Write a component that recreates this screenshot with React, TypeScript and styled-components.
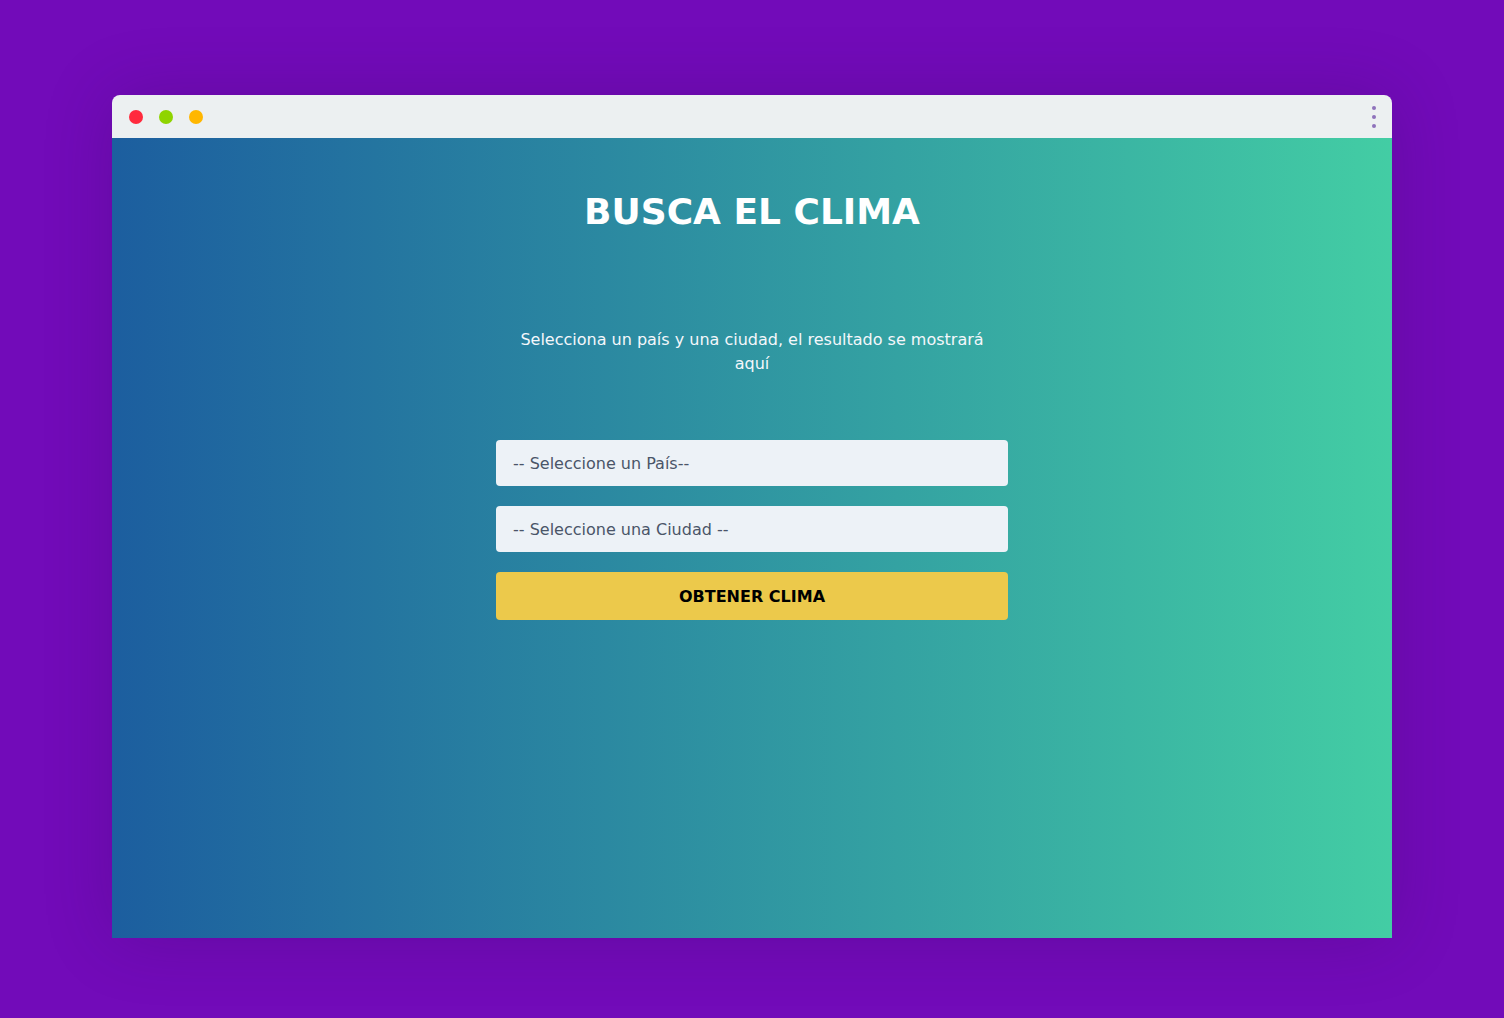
import React from "react";
import styled, { createGlobalStyle } from "styled-components";

const Global = createGlobalStyle`
  html, body { margin: 0; padding: 0; }
  body {
    background: #720bb9;
    font-family: "DejaVu Sans", "Noto Sans", sans-serif;
    min-height: 1018px;
  }
  * { box-sizing: border-box; }
`;

const Page = styled.div`
  padding-top: 95px;
  display: flex;
  justify-content: center;
`;

const Window = styled.div`
  width: 1280px;
  display: flex;
  flex-direction: column;
  border-radius: 8px 8px 0 0;
  box-shadow: 0 0 70px rgba(40, 0, 60, 0.2);
`;

const TitleBar = styled.div`
  height: 43px;
  background: #ecf0f1;
  border-radius: 8px 8px 0 0;
  display: flex;
  align-items: center;
  padding: 0 16px 0 17px;
`;

const Lights = styled.div`
  display: flex;
  gap: 16px;
  flex: 1;
`;

const Light = styled.span<{ $c: string }>`
  width: 14px;
  height: 14px;
  border-radius: 50%;
  background: ${(p) => p.$c};
`;

const Kebab = styled.div`
  display: flex;
  flex-direction: column;
  gap: 5px;
`;

const KDot = styled.span`
  width: 4px;
  height: 4px;
  border-radius: 50%;
  background: #8e72bb;
`;

const Content = styled.main`
  height: 800px;
  background: linear-gradient(to right, #1c5e9f, #43cda4);
  display: flex;
  flex-direction: column;
  align-items: center;
  color: #fff;
`;

const Title = styled.h1`
  margin: 53px 0 0;
  font-size: 36px;
  font-weight: 700;
  line-height: 42px;
  color: #fff;
`;

const Subtitle = styled.p`
  margin: 95px 0 0;
  width: 480px;
  text-align: center;
  font-size: 16px;
  line-height: 24px;
  color: #f4f7fb;
`;

const Form = styled.form`
  margin-top: 64px;
  width: 512px;
  display: flex;
  flex-direction: column;
  gap: 20px;
`;

const Select = styled.select`
  appearance: none;
  -webkit-appearance: none;
  width: 100%;
  height: 46px;
  border: none;
  border-radius: 4px;
  background: #edf2f7;
  color: #4a5568;
  font-family: "DejaVu Sans", sans-serif;
  font-size: 16px;
  padding: 0 17px;
  outline: none;
`;

const Button = styled.button`
  height: 48px;
  border: none;
  border-radius: 4px;
  background: #ecc94b;
  color: #000;
  font-family: "DejaVu Sans", sans-serif;
  font-size: 16px;
  font-weight: 700;
  text-transform: uppercase;
  cursor: pointer;
`;

export default function App() {
  return (
    <>
      <Global />
      <Page>
        <Window>
          <TitleBar>
            <Lights>
              <Light $c="#ff2a3d" />
              <Light $c="#8fd400" />
              <Light $c="#ffb700" />
            </Lights>
            <Kebab>
              <KDot />
              <KDot />
              <KDot />
            </Kebab>
          </TitleBar>
          <Content>
            <Title>BUSCA EL CLIMA</Title>
            <Subtitle>
              Selecciona un país y una ciudad, el resultado se mostrará aquí
            </Subtitle>
            <Form onSubmit={(e) => e.preventDefault()}>
              <Select defaultValue="">
                <option value="">-- Seleccione un País--</option>
              </Select>
              <Select defaultValue="">
                <option value="">-- Seleccione una Ciudad --</option>
              </Select>
              <Button type="submit">Obtener Clima</Button>
            </Form>
          </Content>
        </Window>
      </Page>
    </>
  );
}
